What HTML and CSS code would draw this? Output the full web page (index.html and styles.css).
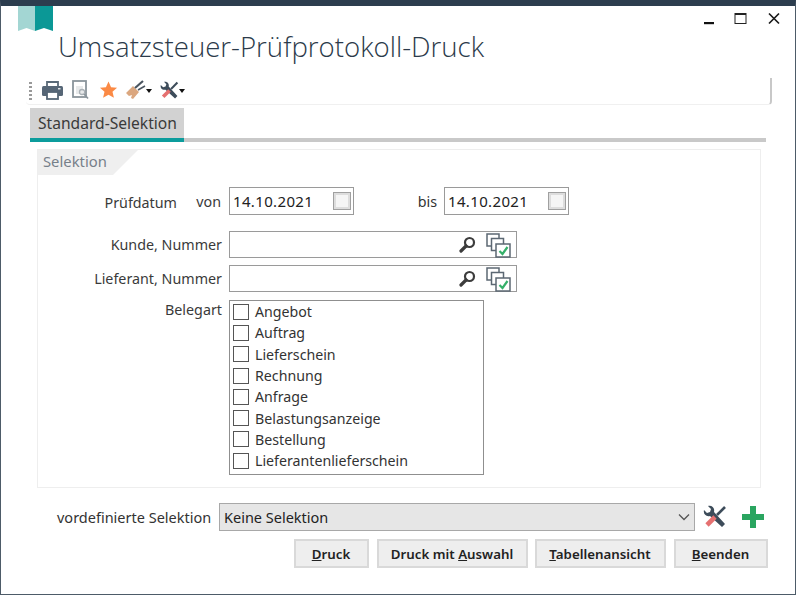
FILE: index.html
```html
<!DOCTYPE html>
<html lang="de">
<head>
<meta charset="utf-8">
<title>Umsatzsteuer-Prüfprotokoll-Druck</title>
<link rel="stylesheet" href="styles.css">
</head>
<body>
<div class="window">
  <header class="top">
    <svg class="bookmark" width="35" height="25" viewBox="0 0 35 25"><path d="M0 0h17v25l-8.500-3L0 25z" fill="#a3d6d3"/><path d="M17 0h18v25l-9-3-9 3z" fill="#0b9896"/></svg>
    <div class="controls">
      <svg width="11" height="14" viewBox="0 0 11 14"><rect x="0" y="10" width="10" height="2.200" fill="#111"/></svg>
      <svg width="14" height="14" viewBox="0 0 14 14"><rect x="1" y="1.500" width="11" height="10" fill="#fff" stroke="#222" stroke-width="1"/><rect x="1" y="1" width="11" height="2" fill="#222"/></svg>
      <svg width="14" height="14" viewBox="0 0 14 14"><path d="M2 1.500l10 10M12 1.500l-10 10" stroke="#1a1a1a" stroke-width="1.700" fill="none"/></svg>
    </div>
  </header>
  <h1 class="title">Umsatzsteuer-Prüfprotokoll-Druck</h1>
  <div class="toolbar">
    <span class="grip"></span>
    <svg class="tb tb-print" width="21" height="20" viewBox="0 0 21 20"><path d="M5 2h11v5H5z" fill="#fff" stroke="#5a6a78" stroke-width="1.800"/><rect x="0" y="6" width="21" height="10" rx="1.500" fill="#566676"/><rect x="5" y="12" width="11" height="7" fill="#fff" stroke="#566676" stroke-width="1.800"/><rect x="16" y="8" width="2.500" height="1.500" fill="#dfe3e6"/></svg>
    <svg class="tb tb-prev" width="18" height="20" viewBox="0 0 18 20"><rect x="1" y="1" width="13" height="16" fill="#fff" stroke="#8b959c" stroke-width="1.800"/><path d="M4 6h7v8H4z" fill="#e8eaeb"/><circle cx="10" cy="12" r="2.500" fill="none" stroke="#aab1b6" stroke-width="1.300"/><path d="M12 14l4 4.500" stroke="#8b959c" stroke-width="1.700"/></svg>
    <svg class="tb tb-star" width="19" height="20" viewBox="0 0 20 20"><path d="M10 1l2.700 6 6.300.6-4.800 4.300 1.500 6.300L10 15l-5.700 3.200 1.500-6.300L1 7.600 7.300 7z" fill="#fb8a45"/></svg>
    <svg class="tb-brush" width="20" height="20" viewBox="0 0 20 20"><path d="M0 13l7-7 6 6-6 7-2-1 1-3-3 1z" fill="#dba77f"/><path d="M9 8l8-7" stroke="#4a5560" stroke-width="2.200" fill="none"/><path d="M12 10l7-4" stroke="#4a5560" stroke-width="1.600" fill="none"/></svg>
    <span class="caret"></span>
    <svg class="tb-tools" width="19" height="19" viewBox="0 0 24 24"><path d="M1 5l3 3 3-1 1-3-3-3c4-1 7 2 6 6l11 12-3 3L7 11C3 12 0 9 1 5z" fill="#3d4c5a"/><path d="M22 2l-8 8" stroke="#3d4c5a" stroke-width="2.600"/><path d="M12 12l-8 8" stroke="#e57070" stroke-width="4.600"/></svg>
    <span class="caret"></span>
  </div>
  <nav class="tabs"><span class="tab">Standard-Selektion</span></nav>
  <section class="group">
    <div class="group-head">Selektion</div>
    <div class="row row-date">
      <span class="label label-date">Prüfdatum</span>
      <span class="von">von</span>
      <span class="field date">14.10.2021<i class="box"></i></span>
      <span class="bis">bis</span>
      <span class="field date">14.10.2021<i class="box"></i></span>
    </div>
    <div class="row row-kunde">
      <span class="label">Kunde, Nummer</span>
      <span class="field lookup">
        <svg class="loupe" width="17" height="17" viewBox="0 0 17 17"><circle cx="10.500" cy="6.500" r="4.500" fill="none" stroke="#3c3c3c" stroke-width="2.200"/><path d="M7 10l-5 5" stroke="#3c3c3c" stroke-width="3.200" stroke-linecap="round"/></svg>
        <svg class="multi" width="26" height="25" viewBox="0 0 26 25"><g fill="#fff" stroke="#5c6873" stroke-width="1.500"><rect x="1" y="1" width="12" height="12"/><rect x="5.500" y="5.500" width="12" height="12"/><rect x="10" y="11" width="14" height="13"/></g><path d="M13.500 18l3 3 5-7" stroke="#35b06a" stroke-width="2.200" fill="none"/></svg>
      </span>
    </div>
    <div class="row row-lief">
      <span class="label">Lieferant, Nummer</span>
      <span class="field lookup">
        <svg class="loupe" width="17" height="17" viewBox="0 0 17 17"><circle cx="10.500" cy="6.500" r="4.500" fill="none" stroke="#3c3c3c" stroke-width="2.200"/><path d="M7 10l-5 5" stroke="#3c3c3c" stroke-width="3.200" stroke-linecap="round"/></svg>
        <svg class="multi" width="26" height="25" viewBox="0 0 26 25"><g fill="#fff" stroke="#5c6873" stroke-width="1.500"><rect x="1" y="1" width="12" height="12"/><rect x="5.500" y="5.500" width="12" height="12"/><rect x="10" y="11" width="14" height="13"/></g><path d="M13.500 18l3 3 5-7" stroke="#35b06a" stroke-width="2.200" fill="none"/></svg>
      </span>
    </div>
    <div class="row row-beleg">
      <span class="label label-beleg">Belegart</span>
      <ul class="list">
        <li><i class="check"></i>Angebot</li>
        <li><i class="check"></i>Auftrag</li>
        <li><i class="check"></i>Lieferschein</li>
        <li><i class="check"></i>Rechnung</li>
        <li><i class="check"></i>Anfrage</li>
        <li><i class="check"></i>Belastungsanzeige</li>
        <li><i class="check"></i>Bestellung</li>
        <li><i class="check"></i>Lieferantenlieferschein</li>
      </ul>
    </div>
  </section>
  <div class="preset">
    <span class="preset-label">vordefinierte Selektion</span>
    <span class="select">Keine Selektion
      <svg width="12" height="8" viewBox="0 0 12 8"><path d="M1 1.500l5 5 5-5" fill="none" stroke="#555" stroke-width="1.300"/></svg>
    </span>
    <svg class="p-tools" width="24" height="24" viewBox="0 0 24 24"><path d="M1 5l3 3 3-1 1-3-3-3c4-1 7 2 6 6l11 12-3 3L7 11C3 12 0 9 1 5z" fill="#3d4c5a"/><path d="M22 2l-8 8" stroke="#3d4c5a" stroke-width="2.600"/><path d="M12 12l-8 8" stroke="#e57070" stroke-width="4.600"/></svg>
    <svg class="p-plus" width="24" height="24" viewBox="0 0 24 24"><path d="M9 1h6v8h8v6h-8v8H9v-8H1V9h8z" fill="#2aa560"/></svg>
  </div>
  <div class="buttons">
    <button class="btn btn-a"><u>D</u>ruck</button>
    <button class="btn btn-b">Druck mit <u>A</u>uswahl</button>
    <button class="btn btn-c"><u>T</u>abellenansicht</button>
    <button class="btn btn-d"><u>B</u>eenden</button>
  </div>
</div>
</body>
</html>
```
FILE: styles.css
```css
* { box-sizing: border-box; }
html, body { margin: 0; padding: 0; }
body { background: #fff; font-family: "Noto Sans", "Open Sans", sans-serif; font-size: 14.300px; color: #333; }
.window { width: 796px; height: 595px; border: 1.500px solid #4d5b68; border-top: 6px solid #2c3d4e; background: #fff; display: flex; flex-direction: column; overflow: hidden; }
.top { display: flex; justify-content: space-between; align-items: flex-start; padding-left: 17px; height: 25px; }
.bookmark { display: block; }
.controls { display: flex; gap: 19px; padding: 6px 14px 0 0; align-items: flex-start; }
.title { margin: 0 0 0 57px; font-family: "Open Sans", sans-serif; font-weight: 300; font-size: 27.600px; line-height: 30px; color: #2b3a4a; height: 47px; white-space: nowrap; }
.toolbar { margin-left: 25px; width: 746px; height: 27px; display: flex; align-items: center; border-right: 2px solid #c8c8c8; border-bottom: 1px solid #f0f0f0; border-radius: 0 0 4px 4px; }
.grip { width: 3px; height: 18px; margin: 0 10px 0 3px; background: repeating-linear-gradient(#999 0 2px, transparent 2px 4px); }
.tb { display: block; margin-right: 9px; margin-top: -2px; }
.tb-brush { margin-top: -2px; margin-left: -1px; }
.tb-tools { margin-top: -2px; margin-left: -1px; }
.caret { width: 0; height: 0; border-left: 3.500px solid transparent; border-right: 3.500px solid transparent; border-top: 4px solid #111; margin: 0 9px 0 0; }
.caret:last-child { margin-right: 0; }
.tabs { margin: 3px 0 0 29px; width: 736px; height: 34px; border-bottom: 4px solid #c9c9c9; }
.tab { display: block; width: 154px; height: 34px; background: #d2d2d2; border-bottom: 4px solid #0c9c9c; padding: 5px 0 0 8px; font-size: 15.600px; line-height: 21px; color: #3a3a3a; white-space: nowrap; }
.group { margin: 7px 0 0 36px; width: 724px; height: 339px; border: 1px solid #eee; }
.group-head { width: 100px; height: 25px; padding: 1px 0 0 5px; font-size: 14.800px; color: #77808a; background: #efefef; clip-path: polygon(0 0, 100% 0, 75% 100%, 0 100%); }
.row { display: flex; align-items: center; }
.label { width: 184px; text-align: right; white-space: nowrap; color: #3a3a3a; }
.row-date { margin-top: 12px; height: 28px; }
.label-date { width: 139px; padding-top: 2px; }
.von { width: 52px; text-align: right; color: #3a3a3a; white-space: nowrap; padding-right: 8px; }
.bis { width: 90px; text-align: right; padding-right: 7px; }
.field { height: 28px; border: 1px solid #9a9a9a; background: #fff; display: flex; align-items: center; color: #222; }
.date { width: 125px; padding-left: 3px; justify-content: space-between; padding-right: 2px; font-size: 15px; letter-spacing: 0.350px; }
.box { width: 18px; height: 18px; border: 1px solid #a0a0a0; box-shadow: inset 0 0 0 2px #ddd; background: #f5f5f5; }
.row-kunde { margin-top: 16px; height: 27px; }
.row-lief { margin-top: 7px; height: 27px; }
.row .label { margin-right: 7px; }
.row-date .label { margin-right: 0; }
.lookup { width: 288px; height: 27px; justify-content: flex-end; gap: 10px; padding-right: 4px; }
.multi { margin-bottom: -1px; }
.row-beleg { margin-top: 8px; align-items: flex-start; }
.label-beleg { line-height: 19px; }
.list { margin: 0; padding: 0 0 0 3px; list-style: none; width: 255px; height: 175px; border: 1px solid #8f8f8f; font-size: 14.200px; }
.list li { height: 21.300px; display: flex; align-items: center; gap: 6px; color: #333; white-space: nowrap; }
.check { width: 16px; height: 16px; border: 1px solid #555; background: #fff; flex: none; }
.preset { display: flex; align-items: center; margin: 15px 0 0 56px; height: 28px; }
.preset-label { width: 162px; color: #333; white-space: nowrap; font-size: 14.500px; }
.select { width: 476px; height: 28px; background: #e6e6e6; border: 1px solid #a8a8a8; padding: 0 4px; display: flex; align-items: center; justify-content: space-between; color: #222; font-size: 14.500px; }
.p-tools { margin-left: 8px; }
.p-plus { margin-left: 14px; }
.buttons { display: flex; margin: 8px 0 0 292.500px; gap: 8px; }
.btn { height: 29px; padding: 0; background: #eee; border: 2px solid #d9d9d9; font: 600 13.300px "Noto Sans", sans-serif; color: #222; white-space: nowrap; }
.btn-a { width: 75px; }
.btn-b { width: 151px; }
.btn-c { width: 131px; margin-left: -1px; }
.btn-d { width: 94px; }
```
